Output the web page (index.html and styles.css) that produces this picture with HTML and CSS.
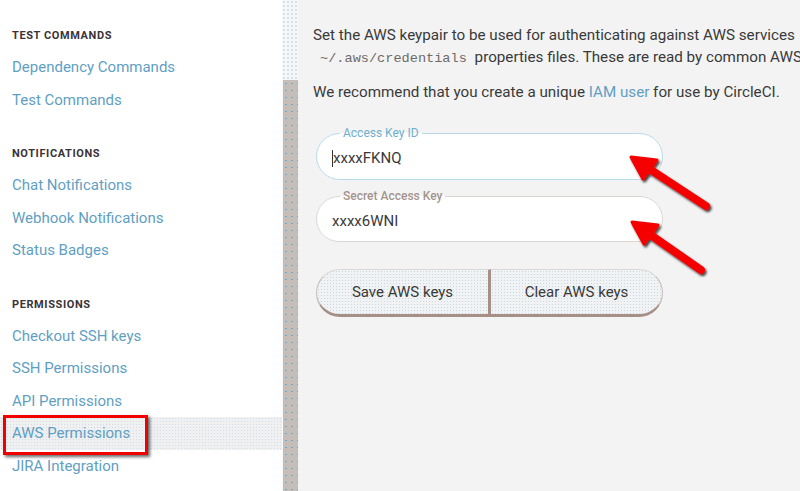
FILE: index.html
```html
<!DOCTYPE html>
<html>
<head>
<meta charset="utf-8">
<link rel="stylesheet" href="styles.css">
</head>
<body>
<div class="page">
  <nav class="sidebar">
    <div class="section">
      <div class="heading">TEST COMMANDS</div>
      <a class="link">Dependency Commands</a>
      <a class="link">Test Commands</a>
    </div>
    <div class="section">
      <div class="heading">NOTIFICATIONS</div>
      <a class="link">Chat Notifications</a>
      <a class="link">Webhook Notifications</a>
      <a class="link">Status Badges</a>
    </div>
    <div class="section">
      <div class="heading">PERMISSIONS</div>
      <a class="link">Checkout SSH keys</a>
      <a class="link">SSH Permissions</a>
      <a class="link">API Permissions</a>
      <a class="link active">AWS Permissions<span class="redbox"></span></a>
      <a class="link">JIRA Integration</a>
    </div>
  </nav>
  <div class="scrollbar"><div class="thumb"></div></div>
  <main class="main">
    <p class="para"><span class="line">Set the AWS keypair to be used for authenticating against AWS services</span><span class="line"><code class="code">~/.aws/credentials</code> properties files. These are read by common AWS</span></p>
    <p class="para">We recommend that you create a unique <a class="inline-link">IAM user</a> for use by CircleCI.</p>
    <form class="form">
      <fieldset class="field focused">
        <legend class="legend">Access Key ID</legend>
        <div class="value"><span class="caret"></span>xxxxFKNQ</div>
      </fieldset>
      <fieldset class="field">
        <legend class="legend">Secret Access Key</legend>
        <div class="value">xxxx6WNI</div>
      </fieldset>
      <div class="buttons">
        <button type="button" class="btn btn-left">Save AWS keys</button>
        <button type="button" class="btn btn-right">Clear AWS keys</button>
      </div>
    </form>
    <svg class="arrows" width="502" height="491" viewBox="298 0 502 491">
      <defs>
        <filter id="sh" x="-20%" y="-20%" width="140%" height="140%">
          <feDropShadow dx="1.5" dy="2" stdDeviation="1" flood-color="#000" flood-opacity="0.75"/>
        </filter>
      </defs>
      <g filter="url(#sh)" fill="#f40000" stroke="#f40000" stroke-linecap="round" stroke-linejoin="round">
        <line x1="706" y1="206" x2="645" y2="166" stroke-width="8"/>
        <polygon points="631,157 657,160 643,179" stroke-width="3"/>
        <line x1="701" y1="270" x2="645" y2="231" stroke-width="8"/>
        <polygon points="632,222 658,225 644,244" stroke-width="3"/>
      </g>
    </svg>
  </main>
</div>
</body>
</html>
```

FILE: styles.css
```css
* { box-sizing: border-box; }
html, body { margin: 0; padding: 0; }
body {
  width: 800px;
  height: 491px;
  overflow: hidden;
  font-family: Roboto, "Liberation Sans", sans-serif;
  background: #f3f3f3;
}
.page {
  display: flex;
  height: 491px;
}
.sidebar {
  width: 282px;
  flex: none;
  background: #fff;
  padding-top: 26px;
}
.section + .section { margin-top: 28px; }
.heading {
  padding-left: 12px;
  font-size: 11px;
  line-height: 20px;
  font-weight: 700;
  letter-spacing: 0.6px;
  color: #3b3336;
  margin-bottom: 5px;
}
.link {
  position: relative;
  display: flex;
  align-items: center;
  height: 32.5px;
  padding-left: 12px;
  font-size: 15px;
  color: #5f9fc3;
  text-decoration: none;
}
.link.active {
  background: #eef0f1;
  background-image: radial-gradient(#d6dde2 0.6px, transparent 0.7px);
  background-size: 3px 3px;
}
.redbox {
  position: absolute;
  left: 3px;
  top: -2px;
  width: 145px;
  height: 40px;
  border: 3px solid #f00000;
  box-shadow: 2px 2px 3px rgba(0,0,0,0.6);
}
.scrollbar {
  width: 16px;
  flex: none;
  background: #f7f7f7;
  background-image: radial-gradient(#cfe3ec 0.7px, transparent 0.8px);
  background-size: 4px 4px;
  padding-top: 80px;
  padding-left: 1px;
}
.thumb {
  height: 411px;
  width: 15px;
  background: #c4bdb8;
  background-image: radial-gradient(#6aaccd 0.7px, transparent 0.9px);
  background-size: 6px 7px;
}
.main {
  position: relative;
  flex: 1;
  min-width: 0;
  overflow: hidden;
  padding: 24px 0 0 15px;
  background: #f3f3f3;
  background-image: radial-gradient(#ffffff 0.6px, transparent 0.7px);
  background-size: 4px 4px;
}
.para {
  margin: 0 0 11px;
  font-size: 15.2px;
  line-height: 22px;
  color: #3a3a3a;
  white-space: nowrap;
}
.line { display: block; }
.code {
  font-family: "Liberation Mono", monospace;
  font-size: 13.6px;
  color: #6f6a68;
  padding: 0 4px 0 7px;
}
.inline-link {
  color: #5f9fc3;
  text-decoration: none;
}
.form {
  margin: 23px 0 0 3px;
  width: 347px;
}
.field {
  margin: 0;
  padding: 0 0 0 15px;
  border: 1px solid #d9d6d4;
  border-radius: 25px;
  background: #fff;
  height: 54px;
}
.field.focused { border-color: #b7d9e8; }
.field + .field { margin-top: 9px; height: 53px; }
.legend {
  margin-left: 8px;
  padding: 0 3px;
  font-size: 12px;
  line-height: 14px;
  color: #a4948e;
  font-weight: 500;
}
.field.focused .legend { color: #6eafcf; font-weight: 400; }
.value {
  display: flex;
  align-items: center;
  height: 36px;
  font-size: 15px;
  color: #3a3a3a;
}
.caret {
  display: inline-block;
  width: 1px;
  height: 17px;
  background: #333;
}
.buttons {
  display: flex;
  margin-top: 27px;
  height: 48px;
}
.btn {
  flex: 1;
  height: 48px;
  font-family: Roboto, "Liberation Sans", sans-serif;
  font-size: 15px;
  color: #3a3a3a;
  background: #f0f2f3;
  background-image: radial-gradient(#c9d9e1 0.6px, transparent 0.7px);
  background-size: 3px 3px;
  border: 1px solid #dcd8d5;
  border-bottom: 3px solid #a68f85;
  padding: 0;
}
.btn-left {
  border-radius: 25px 0 0 25px;
  border-right: 3px solid #a68f85;
  border-left-color: #c6bcb7;
}
.btn-right {
  border-radius: 0 25px 25px 0;
  border-left: none;
  border-right-color: #c6bcb7;
}
.arrows {
  position: absolute;
  left: 0;
  top: 0;
  pointer-events: none;
}
```
